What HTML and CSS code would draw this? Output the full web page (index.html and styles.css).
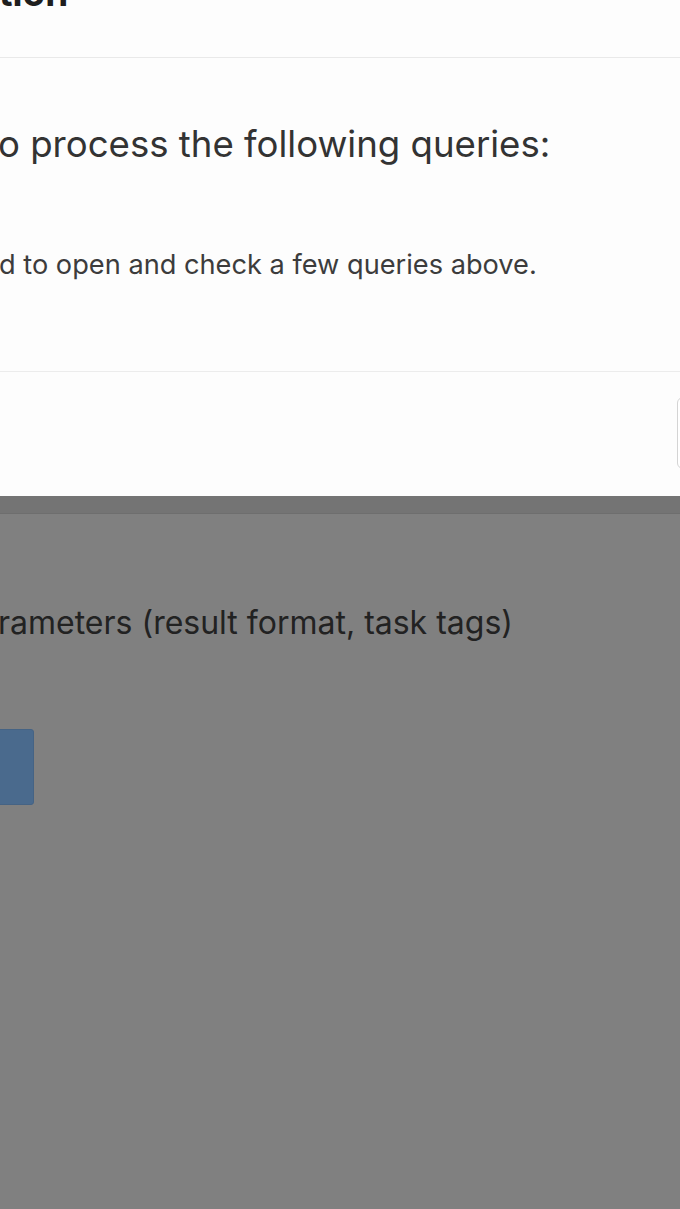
FILE: index.html
```html
<!DOCTYPE html>
<html lang="en">
<head>
    <meta charset="UTF-8">
    <meta name="viewport" content="width=device-width, initial-scale=1.0">
    <title>Queries</title>
    <link rel="stylesheet" href="styles.css">
</head>
<body>
    <div class="modal">
        <div class="modal-header">
            <h2 class="modal-title">tion</h2>
        </div>
        <div class="modal-body">
            <p class="lead">o process the following queries:</p>
            <p class="hint">d to open and check a few queries above.</p>
        </div>
        <div class="modal-footer">
            <button class="btn-cancel" type="button"></button>
        </div>
    </div>

    <!-- page behind the dialog, dimmed -->
    <div class="page">
        <div class="page-bar"></div>
        <p class="page-text">rameters (result format, task tags)</p>
        <button class="btn-run" type="button"></button>
    </div>
</body>
</html>
```

FILE: styles.css
```css
body {
    margin: 0;
    height: 1209px;
    overflow: hidden;
    background-color: #808080;
    font-family: Inter, "Liberation Sans", sans-serif;
}

/* Dialog */
.modal {
    height: 496px;
    background-color: #fdfdfd;
    box-shadow: 0 1px 2px rgba(0, 0, 0, 0.3);
    display: flex;
    flex-direction: column;
}

.modal-header {
    height: 57px;
    border-bottom: 1px solid #e9e9e9;
    overflow: hidden;
}

.modal-title {
    margin: -25px 0 0 -1px;
    font-size: 37px;
    line-height: 36px;
    font-weight: 700;
    color: #1e1e1e;
}

.modal-body {
    height: 314px;
    border-bottom: 1px solid #ececec;
    padding-top: 64px;
    box-sizing: border-box;
}

.lead {
    margin: 0 0 0 -2px;
    font-size: 36.6px;
    line-height: 44px;
    color: #333;
}

.hint {
    margin: 83px 0 0 -1px;
    font-size: 27.2px;
    line-height: 32px;
    color: #3c3c3c;
}

.modal-footer {
    flex: 1;
    display: flex;
    justify-content: flex-end;
    align-items: flex-start;
    padding-top: 25px;
    overflow: hidden;
}

.btn-cancel {
    width: 120px;
    height: 72px;
    margin-right: -117px;
    background-color: #fff;
    border: 1px solid #d4d4d4;
    border-radius: 6px;
}

/* Page under the overlay */
.page {
    overflow: hidden;
}

.page-bar {
    height: 17px;
    background-color: #747474;
    border-bottom: 1px solid #6e6e6e;
}

.page-text {
    margin: 90px 0 0 -2px;
    font-size: 32px;
    line-height: 38px;
    color: #222;
}

.btn-run {
    display: block;
    width: 140px;
    height: 76px;
    margin: 87px 0 0 -106px;
    background-color: #4a6a8d;
    border: 1px solid #456384;
    border-radius: 3px;
}
```
